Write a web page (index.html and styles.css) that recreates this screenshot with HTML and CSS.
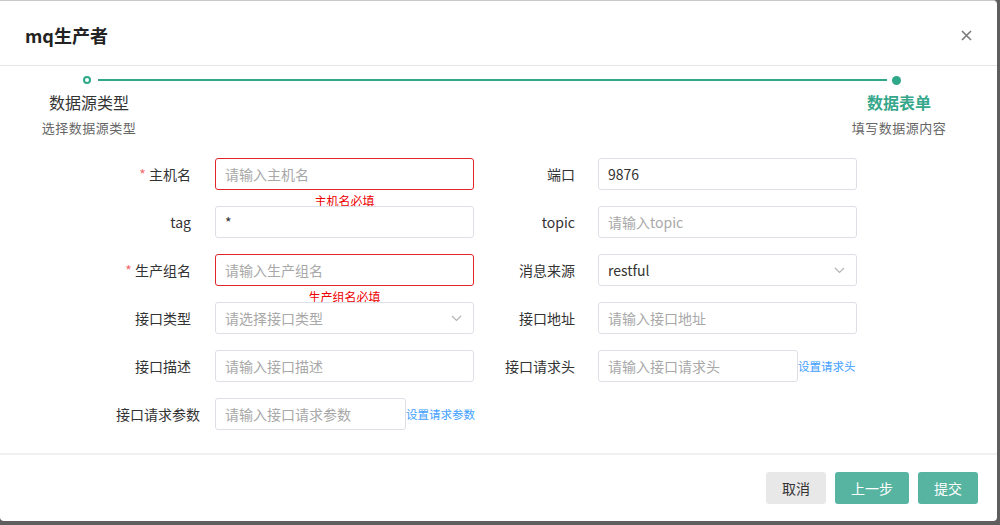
FILE: index.html
```html
<!DOCTYPE html>
<html lang="zh">
<head>
<meta charset="utf-8">
<title>mq生产者</title>
<link rel="stylesheet" href="styles.css">
</head>
<body>
<div class="dialog">
  <div class="header">
    <span class="title">mq生产者</span>
    <svg class="close" width="11" height="11" viewBox="0 0 11 11"><path d="M1 1L10 10M10 1L1 10" stroke="#7a7a7a" stroke-width="1.6" fill="none"/></svg>
  </div>
  <div class="steps">
    <div class="dots">
      <span class="dot hollow"></span>
      <span class="line"></span>
      <span class="dot filled"></span>
    </div>
    <div class="texts">
      <div class="step">
        <div class="step-title">数据源类型</div>
        <div class="step-desc">选择数据源类型</div>
      </div>
      <div class="step">
        <div class="step-title active">数据表单</div>
        <div class="step-desc">填写数据源内容</div>
      </div>
    </div>
  </div>
  <div class="form">
    <div class="field">
      <label class="label"><span class="req">*</span> 主机名</label>
      <div class="control">
        <div class="input error"><span class="ph">请输入主机名</span></div>
        <div class="err-msg">主机名必填</div>
      </div>
    </div>
    <div class="field right">
      <label class="label">端口</label>
      <div class="control">
        <div class="input"><span class="val">9876</span></div>
      </div>
    </div>

    <div class="field">
      <label class="label">tag</label>
      <div class="control">
        <div class="input"><span class="val">*</span></div>
      </div>
    </div>
    <div class="field right">
      <label class="label">topic</label>
      <div class="control">
        <div class="input"><span class="ph">请输入topic</span></div>
      </div>
    </div>

    <div class="field">
      <label class="label"><span class="req">*</span> 生产组名</label>
      <div class="control">
        <div class="input error"><span class="ph">请输入生产组名</span></div>
        <div class="err-msg">生产组名必填</div>
      </div>
    </div>
    <div class="field right">
      <label class="label">消息来源</label>
      <div class="control">
        <div class="input select"><span class="val">restful</span>
          <svg class="chev" width="11" height="7" viewBox="0 0 11 7"><path d="M1 1L5.5 5.5L10 1" stroke="#b4b4b4" stroke-width="1.2" fill="none"/></svg>
        </div>
      </div>
    </div>

    <div class="field">
      <label class="label">接口类型</label>
      <div class="control">
        <div class="input select"><span class="ph">请选择接口类型</span>
          <svg class="chev" width="11" height="7" viewBox="0 0 11 7"><path d="M1 1L5.5 5.5L10 1" stroke="#b4b4b4" stroke-width="1.2" fill="none"/></svg>
        </div>
      </div>
    </div>
    <div class="field right">
      <label class="label">接口地址</label>
      <div class="control">
        <div class="input"><span class="ph">请输入接口地址</span></div>
      </div>
    </div>

    <div class="field">
      <label class="label">接口描述</label>
      <div class="control">
        <div class="input"><span class="ph">请输入接口描述</span></div>
      </div>
    </div>
    <div class="field right">
      <label class="label">接口请求头</label>
      <div class="control">
        <div class="input short-r"><span class="ph">请输入接口请求头</span></div>
        <a class="link">设置请求头</a>
      </div>
    </div>

    <div class="field">
      <label class="label tight">接口请求参数</label>
      <div class="control">
        <div class="input short-l"><span class="ph">请输入接口请求参数</span></div>
        <a class="link">设置请求参数</a>
      </div>
    </div>
  </div>
  <div class="footer">
    <button class="btn cancel">取消</button>
    <button class="btn primary">上一步</button>
    <button class="btn primary">提交</button>
  </div>
</div>
</body>
</html>
```

FILE: styles.css
```css
* { box-sizing: border-box; }
html, body {
  margin: 0;
  padding: 0;
}
body {
  width: 1000px;
  height: 525px;
  background: #5e5e5e;
  font-family: "Noto Sans CJK SC", "Noto Sans", sans-serif;
  color: #333;
  overflow: hidden;
}
.dialog {
  width: 997px;
  height: 521px;
  background: #fff;
  border-top: 1px solid #c8c8c8;
  border-radius: 0 4px 4px 4px;
  display: flex;
  flex-direction: column;
}
.header {
  height: 65px;
  border-bottom: 1px solid #e6e6e6;
  display: flex;
  align-items: center;
  justify-content: space-between;
  padding: 0 25px 0 25px;
}
.title {
  font-size: 18px;
  font-weight: bold;
  color: #222;
  margin-top: 4px;
}
.close {
  margin-top: 4px;
}
.steps {
  padding-top: 9px;
}
.dots {
  display: flex;
  align-items: center;
  height: 10px;
  padding-left: 83px;
  padding-right: 96px;
}
.dot {
  width: 8px;
  height: 8px;
  border-radius: 50%;
  flex: none;
}
.dot.hollow {
  border: 2px solid #2fa88a;
  background: #fff;
}
.dot.filled {
  width: 9px;
  height: 9px;
  background: #2fa88a;
  margin-left: 5px;
}
.line {
  flex: 1;
  height: 2px;
  background: #2fa88a;
  margin-left: 7px;
}
.texts {
  display: flex;
  justify-content: space-between;
  padding-left: 34px;
  padding-right: 43px;
  margin-top: 5px;
}
.step {
  width: 110px;
  text-align: center;
}
.step-title {
  font-size: 16px;
  line-height: 24px;
  color: #333;
}
.step-title.active {
  color: #36a78b;
  font-weight: bold;
}
.step-desc {
  font-size: 13px;
  line-height: 20px;
  color: #666;
  margin-top: 4px;
  letter-spacing: 0.5px;
}
.form {
  margin-top: 20px;
  display: grid;
  grid-template-columns: 374px 374px;
  row-gap: 16px;
  padding-left: 100px;
  padding-bottom: 22px;
  flex: 1;
  align-content: start;
}
.field {
  display: flex;
  align-items: center;
  height: 32px;
}
.field.right {
  margin-left: 9px;
}
.label {
  width: 115px;
  padding-right: 24px;
  text-align: right;
  font-size: 14px;
  color: #333;
  flex: none;
  white-space: nowrap;
}
.field.right .label {
  padding-right: 23px;
}
.label.tight {
  padding-right: 15px;
}
.req {
  color: #f56c6c;
}
.control {
  position: relative;
  display: flex;
  align-items: center;
}
.input {
  width: 259px;
  height: 32px;
  border: 1px solid #dcdfe6;
  border-radius: 3px;
  display: flex;
  align-items: center;
  padding: 0 9px;
  font-size: 14px;
  background: #fff;
}
.input.error {
  border-color: #e0262b;
}
.input.select {
  justify-content: space-between;
  padding-right: 11px;
}
.input.short-l { width: 191px; }
.input.short-r { width: 200px; }
.ph { color: #a8a8a8; }
.val { color: #333; }
.link {
  font-size: 11.5px;
  color: #409eff;
  white-space: nowrap;
}
.err-msg {
  position: absolute;
  top: 100%;
  left: 0;
  width: 259px;
  text-align: center;
  font-size: 12px;
  line-height: 16px;
  color: #ee0000;
  margin-top: 3px;
}
.footer {
  border-top: 2px solid #f0f0f0;
  display: flex;
  justify-content: flex-end;
  gap: 9px;
  padding: 17px 19px 17px 0;
}
.btn {
  height: 32px;
  border: none;
  border-radius: 3px;
  font-family: "Noto Sans CJK SC", sans-serif;
  font-size: 14px;
  padding: 0;
  width: 60px;
}
.btn.cancel {
  background: #e8e8e8;
  color: #333;
}
.btn.primary {
  background: #56b4a0;
  color: #fff;
}
.btn.primary:nth-child(2) {
  width: 74px;
}
```
